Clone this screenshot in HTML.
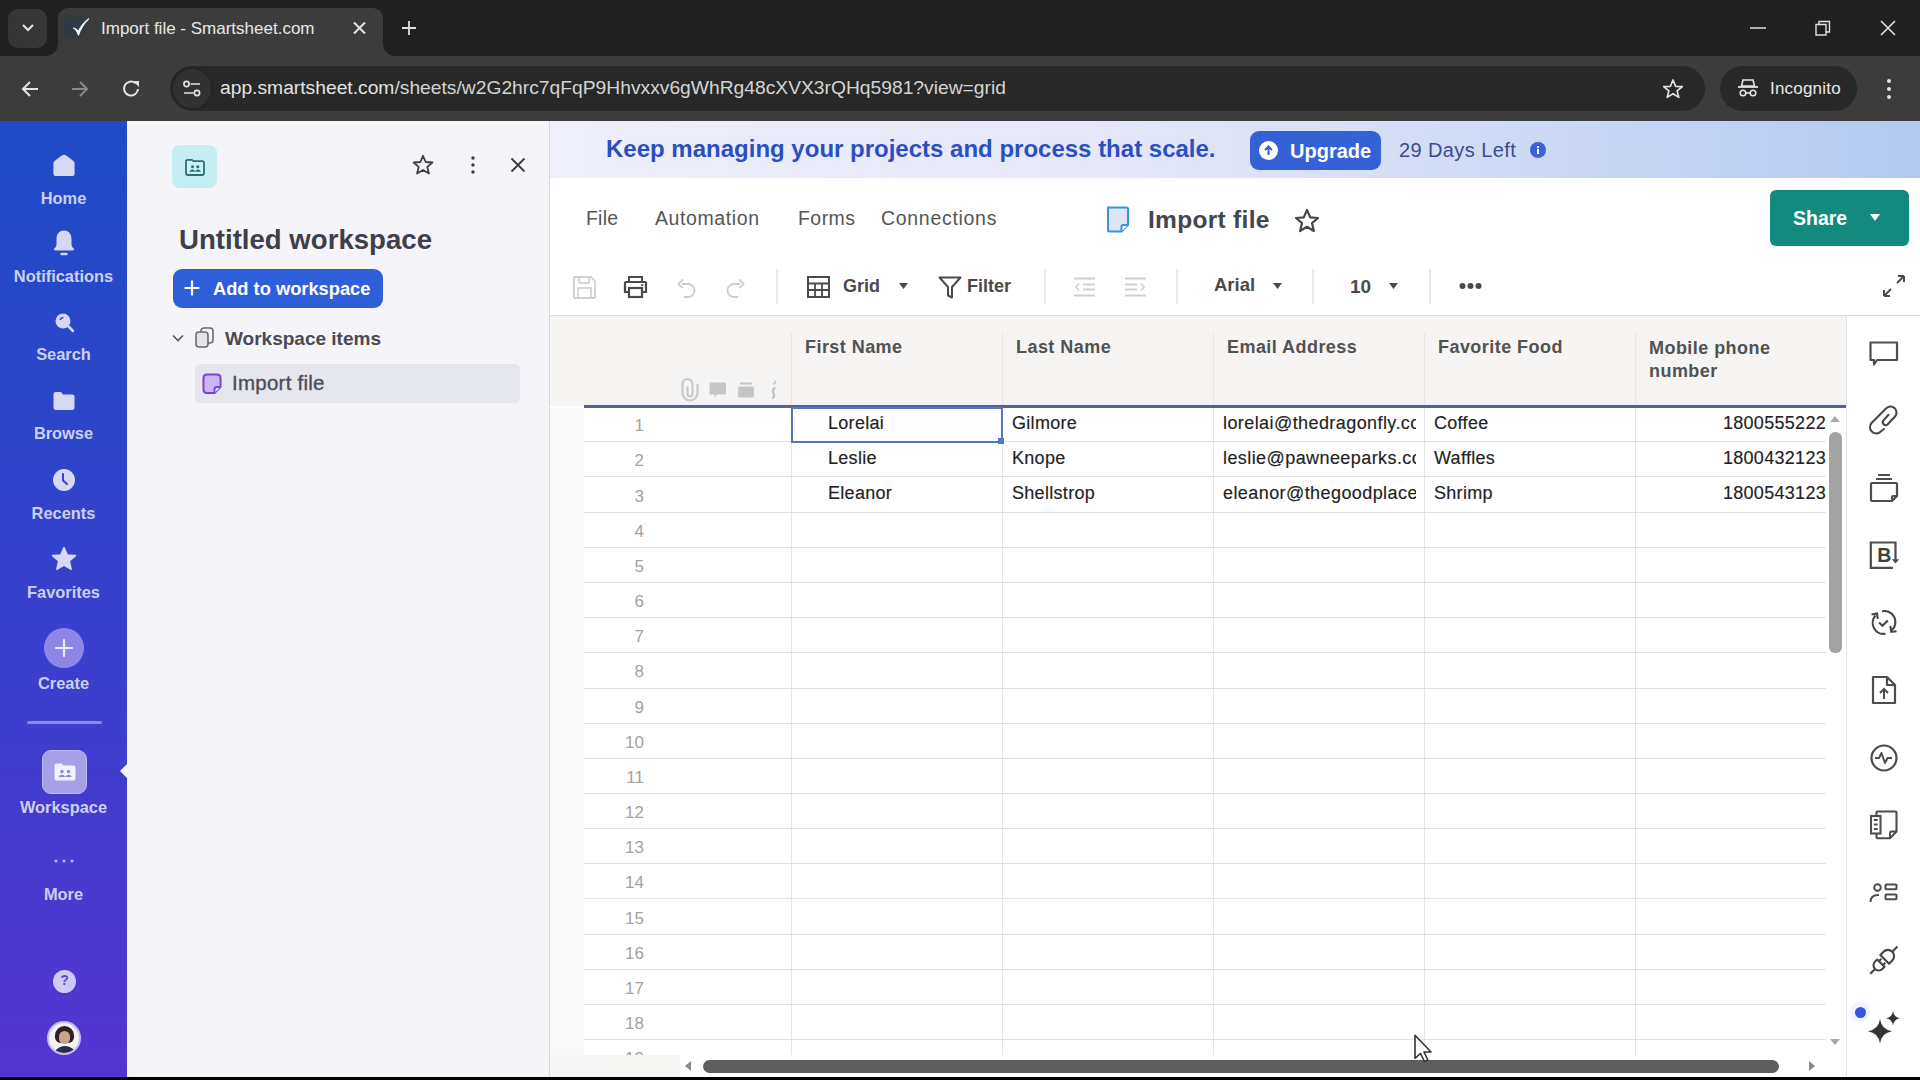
<!DOCTYPE html>
<html><head><meta charset="utf-8">
<style>
*{box-sizing:border-box;margin:0;padding:0}
html,body{width:1920px;height:1080px;overflow:hidden;background:#000;font-family:"Liberation Sans",sans-serif}
.a{position:absolute}
svg{position:absolute;overflow:visible}
/* browser chrome */
#tabstrip{left:0;top:0;width:1920px;height:56px;background:#202020}
#toolbar{left:0;top:56px;width:1920px;height:65px;background:#3c3c3c}
.t{white-space:nowrap;position:absolute}
/* left nav */
#nav{left:0;top:121px;width:127px;height:956px;background:linear-gradient(180deg,#1f4bc6 0%,#2d45ca 35%,#3d3ecd 60%,#5535d1 100%)}
.navl{color:#ccd0f3;font-weight:bold;font-size:16.4px;width:127px;text-align:center;left:0}
/* panel */
#panel{left:127px;top:121px;width:423px;height:956px;background:#f4f4f9;border-right:1px solid #d9d9df}
/* main */
#main{left:550px;top:121px;width:1370px;height:956px;background:#fff}
#banner{left:550px;top:121px;width:1370px;height:57px;background:linear-gradient(90deg,#efeffa 0%,#e6e8f8 40%,#cfdaf5 70%,#b3c8f2 100%)}
.menu{font-size:19px;color:#555;top:207px}
.cellt{font-size:18px;color:#222;letter-spacing:0.3px;-webkit-text-stroke:0.15px #222}
.hdr{font-size:18px;color:#525252;font-weight:bold;letter-spacing:0.45px}
.rn{font-size:17px;color:#a2a2a2;text-align:right;width:40px;left:604px}
</style></head><body>
<!-- TAB STRIP -->
<div id="tabstrip" class="a"></div>
<div class="a" style="left:8px;top:9px;width:39px;height:39px;border-radius:10px;background:#363636"></div>
<svg style="left:20px;top:22px" width="16" height="12"><path d="M3 3 L8 8 L13 3" stroke="#e8e8e8" stroke-width="2" fill="none"/></svg>
<div class="a" style="left:58px;top:8px;width:325px;height:56px;background:#3c3c3c;border-radius:10px 10px 0 0"></div><div class="a" style="left:383px;top:44px;width:12px;height:12px;background:radial-gradient(circle at 100% 0,#202020 11.5px,#3c3c3c 12.2px)"></div><div class="a" style="left:46px;top:44px;width:12px;height:12px;background:radial-gradient(circle at 0 0,#202020 11.5px,#3c3c3c 12.2px)"></div>
<div class="a" style="left:64px;top:15px;width:24px;height:24px;background:radial-gradient(circle at 40% 50%,#2a3a50 0%,#33393f 55%,#3c3c3c 85%)"></div><svg style="left:70px;top:16px" width="24" height="24"><path d="M3.5 12 Q6 13 8.5 19 Q12 9 18.5 3 Q12 8 8.3 15.5 Q6.5 12.5 3.5 12 Z" fill="#f2f2f2" stroke="#f2f2f2" stroke-width="1.2" stroke-linejoin="round"/></svg>
<div class="t" style="left:101px;top:19px;font-size:17px;color:#e8e8e8">Import file - Smartsheet.com</div>
<svg style="left:353px;top:22px" width="13" height="12"><path d="M1 0.5 L12 11.5 M12 0.5 L1 11.5" stroke="#e0e0e0" stroke-width="2.1"/></svg>
<svg style="left:401px;top:20px" width="16" height="16"><path d="M8 1 V15 M1 8 H15" stroke="#e0e0e0" stroke-width="1.8"/></svg>
<svg style="left:1750px;top:27px" width="16" height="4"><path d="M0 1 H16" stroke="#e0e0e0" stroke-width="1.5"/></svg>
<svg style="left:1815px;top:20px" width="16" height="16"><path d="M1 4.5 H11 V15 H1 Z M4 4 V1.5 H14.5 V12 H11.5" stroke="#e0e0e0" stroke-width="1.4" fill="none"/></svg>
<svg style="left:1880px;top:20px" width="16" height="16"><path d="M1 1 L15 15 M15 1 L1 15" stroke="#e0e0e0" stroke-width="1.6"/></svg>
<!-- TOOLBAR -->
<div id="toolbar" class="a"></div>
<svg style="left:20px;top:79px" width="20" height="20"><path d="M18 10 H3 M10 3 L3 10 L10 17" stroke="#e3e3e3" stroke-width="2" fill="none"/></svg>
<svg style="left:70px;top:79px" width="20" height="20"><path d="M2 10 H17 M10 3 L17 10 L10 17" stroke="#8a8a8a" stroke-width="2" fill="none"/></svg>
<svg style="left:121px;top:78px" width="22" height="22"><path d="M17 11 A7 7 0 1 1 14.5 5.2" stroke="#e3e3e3" stroke-width="2" fill="none"/><path d="M12 3 H18 V9 Z" fill="#e3e3e3"/></svg>
<div class="a" style="left:170px;top:66px;width:1535px;height:45px;border-radius:23px;background:#282828"></div>
<div class="a" style="left:171px;top:67px;width:42px;height:43px;border-radius:22px;background:#313131;border:2px solid #242424"></div>
<svg style="left:182px;top:79px" width="20" height="20"><circle cx="4.5" cy="5" r="2.6" stroke="#e3e3e3" stroke-width="1.7" fill="none"/><path d="M8.5 5 H18 M2 14 H11.5" stroke="#e3e3e3" stroke-width="1.7"/><circle cx="15" cy="14" r="2.6" stroke="#e3e3e3" stroke-width="1.7" fill="none"/></svg>
<div class="t" style="left:220px;top:77px;font-size:19.25px;color:#e3e3e3">app.smartsheet.com<span style="color:#d4d4d4">/sheets/w2G2hrc7qFqP9Hhvxxv6gWhRg48cXVX3rQHq5981?view=grid</span></div>
<svg style="left:1662px;top:78px" width="22" height="22"><path d="M11 2 L13.6 8.3 L20.3 8.6 L15.1 12.8 L16.8 19.4 L11 15.7 L5.2 19.4 L6.9 12.8 L1.7 8.6 L8.4 8.3 Z" stroke="#e3e3e3" stroke-width="1.7" fill="none" stroke-linejoin="round"/></svg>
<div class="a" style="left:1720px;top:66px;width:137px;height:45px;border-radius:23px;background:#282828"></div>
<svg style="left:1737px;top:78px" width="22" height="20"><path d="M6 2 H16 L17.5 8 H4.5 Z" fill="none" stroke="#e3e3e3" stroke-width="1.6"/><path d="M1 9 H21" stroke="#e3e3e3" stroke-width="1.8"/><circle cx="6" cy="15" r="2.8" stroke="#e3e3e3" stroke-width="1.6" fill="none"/><circle cx="16" cy="15" r="2.8" stroke="#e3e3e3" stroke-width="1.6" fill="none"/><path d="M8.8 15 H13.2" stroke="#e3e3e3" stroke-width="1.6"/></svg>
<div class="t" style="left:1770px;top:79px;font-size:17px;color:#e8e8e8;letter-spacing:0.2px">Incognito</div>
<svg style="left:1886px;top:78px" width="6" height="22"><circle cx="3" cy="3" r="2" fill="#e3e3e3"/><circle cx="3" cy="11" r="2" fill="#e3e3e3"/><circle cx="3" cy="19" r="2" fill="#e3e3e3"/></svg>

<!-- LEFT NAV -->
<div id="nav" class="a"></div>

<svg style="left:52px;top:153px" width="24" height="24"><path d="M2 10.5 Q2 9 3.5 8 L10.5 2.8 Q12 1.8 13.5 2.8 L20.5 8 Q22 9 22 10.5 V20.5 Q22 22.5 20 22.5 H4 Q2 22.5 2 20.5 Z" fill="#d6d9f6" stroke="#d6d9f6" stroke-width="1.2" stroke-linejoin="round"/></svg>
<div class="t navl" style="top:188.5px">Home</div>
<svg style="left:52px;top:229px" width="24" height="28"><path d="M12 1.5 C6.5 1.5 4.5 5.5 4.5 10.5 V16 Q4.5 18 2 19.5 Q1.5 21.5 3.5 21.5 H20.5 Q22.5 21.5 22 19.5 Q19.5 18 19.5 16 V10.5 C19.5 5.5 17.5 1.5 12 1.5 Z" fill="#d6d9f6"/><path d="M9.5 25 H14.5" stroke="#d6d9f6" stroke-width="2.4" stroke-linecap="round"/></svg>
<div class="t navl" style="top:266.5px">Notifications</div>
<svg style="left:53px;top:311px" width="24" height="24"><circle cx="10" cy="10" r="7.5" fill="#d6d9f6"/><path d="M15 15 L20 20" stroke="#d6d9f6" stroke-width="2.6" stroke-linecap="round"/><path d="M7 9 Q8 6.5 10.5 6.5" stroke="#3b45cc" stroke-width="1.5" fill="none"/></svg>
<div class="t navl" style="top:345px">Search</div>
<svg style="left:52px;top:390px" width="24" height="22"><path d="M1.5 4 Q1.5 2 3.5 2 H9 L11 4.5 H20.5 Q22.5 4.5 22.5 6.5 V18 Q22.5 20 20.5 20 H3.5 Q1.5 20 1.5 18 Z" fill="#d6d9f6"/></svg>
<div class="t navl" style="top:424px">Browse</div>
<svg style="left:52px;top:468px" width="24" height="24"><circle cx="12" cy="12" r="11" fill="#d6d9f6"/><path d="M11 6 V12.5 L15 16" stroke="#3c3fcf" stroke-width="2" fill="none" stroke-linecap="round"/></svg>
<div class="t navl" style="top:504px">Recents</div>
<svg style="left:51px;top:546px" width="26" height="26"><path d="M13 1.5 L16.3 9 L24.5 9.6 L18.3 15 L20.2 23.3 L13 19 L5.8 23.3 L7.7 15 L1.5 9.6 L9.7 9 Z" fill="#d6d9f6" stroke="#d6d9f6" stroke-width="1.5" stroke-linejoin="round"/></svg>
<div class="t navl" style="top:582.5px">Favorites</div>
<div class="a" style="left:44px;top:628px;width:40px;height:40px;border-radius:20px;background:#8d86e6"></div>
<svg style="left:54px;top:638px" width="20" height="20"><path d="M10 2 V18 M2 10 H18" stroke="#eeeefe" stroke-width="2.2" stroke-linecap="round"/></svg>
<div class="t navl" style="top:674px">Create</div>
<div class="a" style="left:27px;top:721px;width:75px;height:3px;background:#8c8ae3;border-radius:2px"></div>
<div class="a" style="left:42px;top:750px;width:45px;height:44px;border-radius:9px;background:#a7a0e8;border:1.5px solid #bdb7f6"></div>
<svg style="left:53px;top:762px" width="24" height="20"><path d="M1.5 3.5 Q1.5 1.5 3.5 1.5 H8.5 L10.5 3.5 H20.5 Q22.5 3.5 22.5 5.5 V16.5 Q22.5 18.5 20.5 18.5 H3.5 Q1.5 18.5 1.5 16.5 Z" fill="#f3f1fd"/><circle cx="9" cy="9.5" r="1.7" fill="#8f86e0"/><circle cx="15.5" cy="9.5" r="1.7" fill="#8f86e0"/><path d="M5.5 15 Q6.5 12.8 9 12.8 Q11.5 12.8 12.3 15 Q13.3 12.8 15.5 12.8 Q18 12.8 18.8 15 Z" fill="#8f86e0"/></svg>
<div class="t navl" style="top:798px">Workspace</div>
<svg style="left:120px;top:763px" width="8" height="16"><path d="M8 0 L0 8 L8 16 Z" fill="#f3f3f8"/></svg>
<svg style="left:53px;top:858px" width="22" height="6"><circle cx="3" cy="3" r="1.6" fill="#b9b6ef"/><circle cx="11" cy="3" r="1.6" fill="#b9b6ef"/><circle cx="19" cy="3" r="1.6" fill="#b9b6ef"/></svg>
<div class="t navl" style="top:885px">More</div>
<div class="a" style="left:53px;top:970px;width:23px;height:23px;border-radius:12px;background:#cfcaf3"></div>
<div class="t" style="left:53px;top:972px;width:23px;text-align:center;font-size:14px;font-weight:bold;color:#5a4fc9">?</div>
<div class="a" style="left:47px;top:1021px;width:34px;height:34px;border-radius:17px;background:#f4f1f4;border:2px solid #c4bdf0;overflow:hidden">
 <div class="a" style="left:6px;top:3px;width:19px;height:17px;border-radius:10px 10px 6px 6px;background:#2d2320"></div>
 <div class="a" style="left:10px;top:8px;width:11px;height:13px;border-radius:6px;background:#c9a48c"></div>
 <div class="a" style="left:4px;top:23px;width:24px;height:12px;border-radius:12px 12px 0 0;background:#2a2d45"></div>
</div>


<!-- PANEL -->
<div id="panel" class="a"></div>
<div class="a" style="left:172px;top:145px;width:45px;height:43px;border-radius:8px;background:#c6eef2"></div>
<svg style="left:184px;top:158px" width="22" height="19"><path d="M2 3.5 Q2 1.8 3.8 1.8 H7.8 L9.3 3.2 H18.2 Q20 3.2 20 5 V15 Q20 17 18 17 H4 Q2 17 2 15 Z" fill="#c8f2f6" stroke="#2a6f75" stroke-width="1.8"/><circle cx="8.5" cy="8.8" r="1.5" fill="#2a6f75"/><circle cx="13.8" cy="8.8" r="1.5" fill="#2a6f75"/><path d="M5.3 13.8 Q6 11.6 8.5 11.6 Q10.5 11.6 11.2 13.8 Q11.8 11.6 13.8 11.6 Q16.2 11.6 16.9 13.8 Z" fill="#2a6f75"/></svg>
<svg style="left:412px;top:154px" width="22" height="22"><path d="M11 1.8 L13.7 8 L20.4 8.5 L15.3 12.9 L16.9 19.5 L11 16 L5.1 19.5 L6.7 12.9 L1.6 8.5 L8.3 8 Z" stroke="#3d3d46" stroke-width="1.8" fill="none" stroke-linejoin="round"/></svg>
<svg style="left:470px;top:155px" width="6" height="20"><circle cx="3" cy="3" r="1.7" fill="#3d3d46"/><circle cx="3" cy="10" r="1.7" fill="#3d3d46"/><circle cx="3" cy="17" r="1.7" fill="#3d3d46"/></svg>
<svg style="left:510px;top:157px" width="16" height="16"><path d="M1.5 1.5 L14.5 14.5 M14.5 1.5 L1.5 14.5" stroke="#3d3d46" stroke-width="1.8"/></svg>
<div class="t" style="left:179px;top:223.5px;font-size:27.6px;font-weight:bold;color:#3f3f4a">Untitled workspace</div>
<div class="a" style="left:173px;top:269px;width:210px;height:39px;border-radius:9px;background:#2f5ed9"></div>
<svg style="left:183px;top:279px" width="18" height="18"><path d="M9 1.5 V16.5 M1.5 9 H16.5" stroke="#fff" stroke-width="2.2"/></svg>
<div class="t" style="left:213px;top:278px;font-size:18.3px;font-weight:bold;color:#fff">Add to workspace</div>
<svg style="left:171px;top:333px" width="14" height="10"><path d="M2 2.5 L7 7.5 L12 2.5" stroke="#55555e" stroke-width="1.6" fill="none"/></svg>
<svg style="left:194px;top:326px" width="22" height="24"><rect x="7" y="2" width="12" height="15" rx="3" fill="none" stroke="#6a6a72" stroke-width="1.6"/><rect x="2" y="6" width="12" height="15" rx="3" fill="#e4e4ea" stroke="#6a6a72" stroke-width="1.6"/></svg>
<div class="t" style="left:225px;top:327.5px;font-size:19px;font-weight:bold;color:#4a4a54">Workspace items</div>
<div class="a" style="left:195px;top:364px;width:325px;height:39px;border-radius:5px;background:#e6e6ee"></div>
<svg style="left:202px;top:373px" width="20" height="22"><path d="M5 1.5 H15 Q18.5 1.5 18.5 5 V14 L12.5 20 H5 Q1.5 20 1.5 16.5 V5 Q1.5 1.5 5 1.5 Z" fill="#cbb6f7" stroke="#7840de" stroke-width="2" stroke-linejoin="round"/><path d="M18.5 14 H15 Q12.5 14 12.5 16.5 V20" fill="#e9dffc" stroke="#7840de" stroke-width="1.8"/></svg>
<div class="t" style="left:232px;top:371px;font-size:20.5px;color:#4d4d56;letter-spacing:0.25px;-webkit-text-stroke:0.35px #4d4d56">Import file</div>


<!-- MAIN -->
<div id="main" class="a"></div>
<div id="banner" class="a"></div>
<div class="t" style="left:606px;top:135px;font-size:24px;font-weight:bold;color:#2a4fc2">Keep managing your projects and process that scale.</div>
<div class="a" style="left:1250px;top:131px;width:131px;height:39px;border-radius:9px;background:#3461d6"></div>
<div class="a" style="left:1259px;top:141px;width:19px;height:19px;border-radius:10px;background:#fff"></div>
<svg style="left:1259px;top:141px" width="19" height="19"><path d="M9.5 14 V5.5 M6 9 L9.5 5.5 L13 9" stroke="#3461d6" stroke-width="2" fill="none"/></svg>
<div class="t" style="left:1290px;top:139.5px;font-size:20px;font-weight:bold;color:#fff">Upgrade</div>
<div class="t" style="left:1399px;top:139px;font-size:20px;color:#3b4c8e;letter-spacing:0.4px">29 Days Left</div>
<div class="a" style="left:1530px;top:142px;width:16px;height:16px;border-radius:8px;background:#3a63d8"></div>
<div class="a" style="left:1537px;top:149px;width:2.2px;height:5px;background:#fff"></div><div class="a" style="left:1537px;top:145.5px;width:2.2px;height:2.2px;background:#fff"></div>
<div class="t" style="left:586px;top:207px;font-size:19.5px;color:#555;letter-spacing:0.2px">File</div>
<div class="t" style="left:655px;top:207px;font-size:19.5px;color:#555;letter-spacing:0.6px">Automation</div>
<div class="t" style="left:798px;top:207px;font-size:19.5px;color:#555;letter-spacing:0.45px">Forms</div>
<div class="t" style="left:881px;top:207px;font-size:19.5px;color:#555;letter-spacing:0.7px">Connections</div>
<svg style="left:1105px;top:205px" width="26" height="29"><path d="M3 2.5 H21.5 Q23 2.5 23 4 V20 L16.5 26.5 H4.5 Q3 26.5 3 25 V4 Q3 2.5 4.5 2.5 Z" fill="#d9e7f8" stroke="#3b93cf" stroke-width="2" stroke-linejoin="round"/><path d="M23 20 H18 Q16.5 20 16.5 21.5 V26.5" fill="#fff" stroke="#3b93cf" stroke-width="2"/></svg>
<div class="t" style="left:1148px;top:206px;font-size:24.5px;font-weight:bold;color:#45454c;letter-spacing:0.3px">Import file</div>
<svg style="left:1294px;top:208px" width="26" height="25"><path d="M13 2 L16.2 9.4 L24 10 L18 15.2 L19.9 23 L13 18.8 L6.1 23 L8 15.2 L2 10 L9.8 9.4 Z" stroke="#45454c" stroke-width="2.2" fill="none" stroke-linejoin="round"/></svg>
<div class="a" style="left:1770px;top:190px;width:139px;height:56px;border-radius:6px;background:#138a7e"></div>
<div class="t" style="left:1793px;top:207px;font-size:19.5px;font-weight:bold;color:#fff">Share</div>
<svg style="left:1869px;top:213px" width="12" height="9"><path d="M1 1 H11 L6 8 Z" fill="#fff"/></svg>
<svg style="left:573px;top:276px" width="23" height="23"><path d="M1 2 Q1 1 2 1 H18 L22 5 V21 Q22 22 21 22 H2 Q1 22 1 21 Z" fill="none" stroke="#cfcfcf" stroke-width="1.8"/><rect x="6" y="1" width="10" height="6" fill="none" stroke="#cfcfcf" stroke-width="1.6"/><rect x="5" y="12" width="13" height="10" fill="none" stroke="#cfcfcf" stroke-width="1.6"/></svg>
<svg style="left:623px;top:275px" width="25" height="23"><path d="M6 7 V2 H19 V7" fill="none" stroke="#4a4a4a" stroke-width="2"/><path d="M6 17 H2 V8 Q2 7 3 7 H22 Q23 7 23 8 V17 H19" fill="none" stroke="#4a4a4a" stroke-width="2.2"/><rect x="6" y="13" width="13" height="9" fill="none" stroke="#4a4a4a" stroke-width="2.2"/><path d="M18 10 H20.5" stroke="#4a4a4a" stroke-width="1.5"/></svg>
<svg style="left:675px;top:277px" width="22" height="21"><path d="M7 7 H13 A6.5 6.5 0 0 1 13 20 H9" fill="none" stroke="#cdcdcd" stroke-width="1.8"/><path d="M3 7 L8 2.5 M3 7 L8 11" stroke="#cdcdcd" stroke-width="1.8" fill="none"/></svg>
<svg style="left:725px;top:277px" width="22" height="21"><path d="M15 7 H9 A6.5 6.5 0 0 0 9 20 H13" fill="none" stroke="#cdcdcd" stroke-width="1.8"/><path d="M19 7 L14 2.5 M19 7 L14 11" stroke="#cdcdcd" stroke-width="1.8" fill="none"/></svg>
<div class="a" style="left:776px;top:269px;width:2px;height:35px;background:#e8e8e8"></div>
<div class="a" style="left:1044px;top:269px;width:2px;height:35px;background:#e8e8e8"></div>
<div class="a" style="left:1176px;top:269px;width:2px;height:35px;background:#e8e8e8"></div>
<div class="a" style="left:1312px;top:269px;width:2px;height:35px;background:#e8e8e8"></div>
<div class="a" style="left:1429px;top:269px;width:2px;height:35px;background:#e8e8e8"></div>
<svg style="left:807px;top:276px" width="23" height="22"><rect x="1" y="1" width="21" height="20" fill="none" stroke="#4a4a4a" stroke-width="2"/><path d="M1 7.5 H22 M1 14 H22 M8 7.5 V21 M15 7.5 V21" stroke="#4a4a4a" stroke-width="1.8"/></svg>
<div class="t" style="left:843px;top:276px;font-size:18px;font-weight:bold;color:#4a4a4a">Grid</div>
<svg style="left:899px;top:283px" width="9" height="6"><path d="M0 0 H9 L4.5 6 Z" fill="#4a4a4a"/></svg>
<svg style="left:938px;top:276px" width="24" height="23"><path d="M1.5 1.5 H22.5 L14 11 V21.5 L10 19.5 V11 Z" fill="none" stroke="#4a4a4a" stroke-width="2" stroke-linejoin="round"/></svg>
<div class="t" style="left:967px;top:276px;font-size:18px;font-weight:bold;color:#4a4a4a">Filter</div>
<svg style="left:1073px;top:277px" width="23" height="20"><path d="M1 1.5 H22 M10 7.5 H22 M10 12.5 H22 M1 18.5 H22" stroke="#d0d0d0" stroke-width="1.8"/><path d="M6 6.5 L3 10 L6 13.5" stroke="#d0d0d0" stroke-width="1.6" fill="none"/></svg>
<svg style="left:1124px;top:277px" width="23" height="20"><path d="M1 1.5 H22 M1 7.5 H13 M1 12.5 H13 M1 18.5 H22" stroke="#d0d0d0" stroke-width="1.8"/><path d="M17 6.5 L20 10 L17 13.5" stroke="#d0d0d0" stroke-width="1.6" fill="none"/></svg>
<div class="t" style="left:1214px;top:274px;font-size:18.5px;font-weight:bold;color:#4a4a4a">Arial</div>
<svg style="left:1273px;top:283px" width="9" height="6"><path d="M0 0 H9 L4.5 6 Z" fill="#4a4a4a"/></svg>
<div class="t" style="left:1350px;top:276px;font-size:19px;font-weight:bold;color:#4a4a4a">10</div>
<svg style="left:1389px;top:283px" width="9" height="6"><path d="M0 0 H9 L4.5 6 Z" fill="#4a4a4a"/></svg>
<svg style="left:1459px;top:282px" width="23" height="8"><circle cx="3.5" cy="4" r="3" fill="#4a4a4a"/><circle cx="11.5" cy="4" r="3" fill="#4a4a4a"/><circle cx="19.5" cy="4" r="3" fill="#4a4a4a"/></svg>
<svg style="left:1882px;top:274px" width="24" height="24"><path d="M2 22 L9 15 M2 22 V16 M2 22 H8 M22 2 L15 9 M22 2 V8 M22 2 H16" stroke="#4a4a4a" stroke-width="2" fill="none"/></svg>
<div class="a" style="left:550px;top:315px;width:1370px;height:1px;background:#dcdcdc"></div>
<div class="a" style="left:550px;top:316px;width:1296px;height:90px;background:#f6f5f4"></div>
<div class="a" style="left:550px;top:408px;width:34px;height:647px;background:#f9f9f9"></div>
<div class="a" style="left:584px;top:408px;width:1262px;height:647px;background:#fff"></div>
<div class="a" style="left:584px;top:402px;width:1262px;height:3px;background:#f0f0f8"></div><div class="a" style="left:584px;top:405px;width:1262px;height:3px;background:#55618e"></div>
<div class="a" style="left:791px;top:333px;width:1px;height:72px;background:#e8e6e4"></div>
<div class="a" style="left:791px;top:408px;width:1px;height:647px;background:#e6e6e6"></div>
<div class="a" style="left:1002px;top:333px;width:1px;height:72px;background:#e8e6e4"></div>
<div class="a" style="left:1002px;top:408px;width:1px;height:647px;background:#e6e6e6"></div>
<div class="a" style="left:1213px;top:333px;width:1px;height:72px;background:#e8e6e4"></div>
<div class="a" style="left:1213px;top:408px;width:1px;height:647px;background:#e6e6e6"></div>
<div class="a" style="left:1424px;top:333px;width:1px;height:72px;background:#e8e6e4"></div>
<div class="a" style="left:1424px;top:408px;width:1px;height:647px;background:#e6e6e6"></div>
<div class="a" style="left:1635px;top:333px;width:1px;height:72px;background:#e8e6e4"></div>
<div class="a" style="left:1635px;top:408px;width:1px;height:647px;background:#e6e6e6"></div>
<div class="a" style="left:584px;top:441px;width:1242px;height:1px;background:#e2e2e2"></div>
<div class="t rn" style="top:416.2px">1</div>
<div class="a" style="left:584px;top:476px;width:1242px;height:1px;background:#e2e2e2"></div>
<div class="t rn" style="top:451.4px">2</div>
<div class="a" style="left:584px;top:512px;width:1242px;height:1px;background:#e2e2e2"></div>
<div class="t rn" style="top:486.5px">3</div>
<div class="a" style="left:584px;top:547px;width:1242px;height:1px;background:#e2e2e2"></div>
<div class="t rn" style="top:521.7px">4</div>
<div class="a" style="left:584px;top:582px;width:1242px;height:1px;background:#e2e2e2"></div>
<div class="t rn" style="top:556.9px">5</div>
<div class="a" style="left:584px;top:617px;width:1242px;height:1px;background:#e2e2e2"></div>
<div class="t rn" style="top:592.1px">6</div>
<div class="a" style="left:584px;top:652px;width:1242px;height:1px;background:#e2e2e2"></div>
<div class="t rn" style="top:627.2px">7</div>
<div class="a" style="left:584px;top:688px;width:1242px;height:1px;background:#e2e2e2"></div>
<div class="t rn" style="top:662.4px">8</div>
<div class="a" style="left:584px;top:723px;width:1242px;height:1px;background:#e2e2e2"></div>
<div class="t rn" style="top:697.6px">9</div>
<div class="a" style="left:584px;top:758px;width:1242px;height:1px;background:#e2e2e2"></div>
<div class="t rn" style="top:732.7px">10</div>
<div class="a" style="left:584px;top:793px;width:1242px;height:1px;background:#e2e2e2"></div>
<div class="t rn" style="top:767.9px">11</div>
<div class="a" style="left:584px;top:828px;width:1242px;height:1px;background:#e2e2e2"></div>
<div class="t rn" style="top:803.1px">12</div>
<div class="a" style="left:584px;top:863px;width:1242px;height:1px;background:#e2e2e2"></div>
<div class="t rn" style="top:838.2px">13</div>
<div class="a" style="left:584px;top:898px;width:1242px;height:1px;background:#e2e2e2"></div>
<div class="t rn" style="top:873.4px">14</div>
<div class="a" style="left:584px;top:934px;width:1242px;height:1px;background:#e2e2e2"></div>
<div class="t rn" style="top:908.6px">15</div>
<div class="a" style="left:584px;top:969px;width:1242px;height:1px;background:#e2e2e2"></div>
<div class="t rn" style="top:943.8px">16</div>
<div class="a" style="left:584px;top:1004px;width:1242px;height:1px;background:#e2e2e2"></div>
<div class="t rn" style="top:978.9px">17</div>
<div class="a" style="left:584px;top:1039px;width:1242px;height:1px;background:#e2e2e2"></div>
<div class="t rn" style="top:1014.1px">18</div>
<div class="t rn" style="top:1049px;height:6px;overflow:hidden">19</div>
<div class="t hdr" style="left:805px;top:337px">First Name</div>
<div class="t hdr" style="left:1016px;top:337px">Last Name</div>
<div class="t hdr" style="left:1227px;top:337px">Email Address</div>
<div class="t hdr" style="left:1438px;top:337px">Favorite Food</div>
<div class="t hdr" style="left:1649px;top:337px;line-height:23px">Mobile phone<br>number</div>
<svg style="left:680px;top:377px" width="20" height="24"><path d="M7.5 10 V17 A2.5 2.5 0 0 0 12.5 17 V7 A5 5 0 0 0 2.5 7 V16 A7.5 7.5 0 0 0 17.5 16 V8" fill="none" stroke="#c9c9c9" stroke-width="2.2" stroke-linecap="round"/></svg><svg style="left:709px;top:382px" width="18" height="17"><path d="M0.5 1.5 Q0.5 0.5 1.5 0.5 H16 Q17 0.5 17 1.5 V11.5 Q17 12.5 16 12.5 H8 L5.5 16 V12.5 H1.5 Q0.5 12.5 0.5 11.5 Z" fill="#c6c6c6"/></svg><svg style="left:737px;top:382px" width="18" height="16"><rect x="3" y="0.5" width="12" height="2" fill="#c6c6c6"/><rect x="1" y="4.5" width="16" height="11" rx="1.5" fill="#c6c6c6"/><path d="M4 8 H14 M4 11.5 H14" stroke="#bdbdbd" stroke-width="1"/></svg><svg style="left:768px;top:378px" width="12" height="22"><path d="M7.5 3.5 L6 6" stroke="#cacaca" stroke-width="2" stroke-linecap="round"/><path d="M6.5 10 Q4 13 5.5 15.5 Q7 18 5 20" fill="none" stroke="#c4c4c4" stroke-width="2.4" stroke-linecap="round"/></svg>



<div class="t cellt" style="left:828px;top:412.7px">Lorelai</div>
<div class="t cellt" style="left:1012px;top:412.7px">Gilmore</div>
<div class="a" style="left:1223px;top:412.7px;width:193px;height:24px;overflow:hidden"><div class="t cellt" style="left:0;top:0;letter-spacing:0.42px">lorelai@thedragonfly.cc</div></div>
<div class="t cellt" style="left:1434px;top:412.7px">Coffee</div>
<div class="a" style="left:1636px;top:412.7px;width:190px;height:24px;overflow:hidden"><div class="t cellt" style="right:0;top:0;letter-spacing:0.3px">1800555222</div></div>
<div class="t cellt" style="left:828px;top:447.9px">Leslie</div>
<div class="t cellt" style="left:1012px;top:447.9px">Knope</div>
<div class="a" style="left:1223px;top:447.9px;width:193px;height:24px;overflow:hidden"><div class="t cellt" style="left:0;top:0;letter-spacing:0.42px">leslie@pawneeparks.com</div></div>
<div class="t cellt" style="left:1434px;top:447.9px">Waffles</div>
<div class="a" style="left:1636px;top:447.9px;width:190px;height:24px;overflow:hidden"><div class="t cellt" style="right:0;top:0;letter-spacing:0.3px">1800432123</div></div>
<div class="t cellt" style="left:828px;top:483.0px">Eleanor</div>
<div class="t cellt" style="left:1012px;top:483.0px">Shellstrop</div>
<div class="a" style="left:1223px;top:483.0px;width:193px;height:24px;overflow:hidden"><div class="t cellt" style="left:0;top:0;letter-spacing:0.42px">eleanor@thegoodplace.com</div></div>
<div class="t cellt" style="left:1434px;top:483.0px">Shrimp</div>
<div class="a" style="left:1636px;top:483.0px;width:190px;height:24px;overflow:hidden"><div class="t cellt" style="right:0;top:0;letter-spacing:0.3px">1800543123</div></div>
<div class="a" style="left:791px;top:406.5px;width:212px;height:36px;border:2px solid #5477bd"></div>
<div class="a" style="left:998px;top:438px;width:6px;height:6px;background:#5477bd"></div>
<svg style="left:1829px;top:415px" width="12" height="8"><path d="M1 7 L6 1 L11 7 Z" fill="#a8a8a8"/></svg>
<div class="a" style="left:1829px;top:432px;width:13px;height:221px;border-radius:6px;background:#a3a3a3"></div>
<svg style="left:1829px;top:1038px" width="12" height="8"><path d="M1 1 L6 7 L11 1 Z" fill="#a8a8a8"/></svg>
<div class="a" style="left:550px;top:1055px;width:1296px;height:22px;background:#fff"></div>
<div class="a" style="left:550px;top:1055px;width:130px;height:22px;background:linear-gradient(90deg,#f6f6f7,#f7f6f4)"></div>
<svg style="left:684px;top:1060px" width="8" height="12"><path d="M7 1 L1 6 L7 11 Z" fill="#8a8a8a"/></svg>
<div class="a" style="left:703px;top:1060px;width:1076px;height:13px;border-radius:7px;background:#5e5e5e"></div>
<svg style="left:1808px;top:1060px" width="8" height="12"><path d="M1 1 L7 6 L1 11 Z" fill="#8a8a8a"/></svg>
<div class="a" style="left:1846px;top:316px;width:74px;height:761px;background:#fff;border-left:1px solid #e2e2e2"></div>
<svg style="left:1869px;top:341px" width="30" height="26"><path d="M1.5 1.5 H28 V19 H8 L5 23.5 V19 H1.5 Z" fill="none" stroke="#4d4d4d" stroke-width="2.2" stroke-linejoin="round"/></svg>
<svg style="left:1860px;top:395px" width="50" height="50"><path d="M24 34 L19.5 37.5 A6.3 6.3 0 0 1 11.5 28 L26 13.5 A5.3 5.3 0 0 1 35 21.5 L27.5 29.5 A2.9 2.9 0 0 1 23.3 25.6 L28.5 19.8" fill="none" stroke="#464646" stroke-width="2.1" stroke-linecap="round" stroke-linejoin="round"/></svg>
<svg style="left:1869px;top:473px" width="30" height="30"><path d="M9 2 H21 M7 6 H23" stroke="#4d4d4d" stroke-width="2"/><path d="M2 11 Q2 10 3 10 H27 Q28 10 28 11 V23 L23 28 H3 Q2 28 2 27 Z" fill="none" stroke="#4d4d4d" stroke-width="2.2" stroke-linejoin="round"/><path d="M28 23 H24 Q23 23 23 24 V28" fill="none" stroke="#4d4d4d" stroke-width="2"/></svg>
<svg style="left:1869px;top:541px" width="32" height="30"><path d="M26.5 19 V1.5 H1.8 V26.8 H24" fill="none" stroke="#4d4d4d" stroke-width="2.2"/><path d="M22.8 18.2 H30.2 L26.5 22.5 Z" fill="#4d4d4d"/><text x="8.3" y="20.8" font-family="Liberation Sans" font-weight="bold" font-size="19.5" fill="#3f3f3f">B</text></svg>
<svg style="left:1864px;top:600px" width="40" height="45"><path d="M18 11.3 A11 11 0 0 1 28 30 M21.5 33.7 A11 11 0 0 1 11.5 15.5" fill="none" stroke="#454545" stroke-width="2.1"/><path d="M26.3 26 L27.3 31.8 L32.5 31.2 M7.5 14.5 L13 13.5 L13.8 19" fill="none" stroke="#454545" stroke-width="2.1" stroke-linejoin="miter"/><path d="M15 22.5 L18.5 25.8 L23.8 20.5" fill="none" stroke="#454545" stroke-width="2.1"/></svg>
<svg style="left:1871px;top:675px" width="26" height="30"><path d="M2 2 H16 L24 10 V28 H2 Z M16 2 V10 H24" fill="none" stroke="#4d4d4d" stroke-width="2.2" stroke-linejoin="round"/><path d="M13 24 V14 M9 18 L13 14 L17 18" fill="none" stroke="#4d4d4d" stroke-width="2"/></svg>
<svg style="left:1869px;top:743px" width="30" height="30"><circle cx="15" cy="15" r="12.5" fill="none" stroke="#4d4d4d" stroke-width="2.2"/><path d="M6 15 H10 L12.5 10 L16 20 L18.5 15 H23" fill="none" stroke="#4d4d4d" stroke-width="2" stroke-linejoin="round"/></svg>
<svg style="left:1869px;top:810px" width="30" height="31"><path d="M7.5 2.5 Q7.5 1.5 8.5 1.5 H26.5 Q27.5 1.5 27.5 2.5 V21.5 L21 28.3 H8.5 Q7.5 28.3 7.5 27.3 Z" fill="#fff" stroke="#4d4d4d" stroke-width="2.1" stroke-linejoin="round"/><path d="M27.5 21.5 H22.5 Q21 21.5 21 23 V28.3" fill="none" stroke="#4d4d4d" stroke-width="1.9"/><rect x="2" y="6" width="9.5" height="17.5" fill="#fff" stroke="#4d4d4d" stroke-width="2.1"/><path d="M4.8 10 H8.7 M4.8 14.5 H8.7 M4.8 19 H8.7" stroke="#4d4d4d" stroke-width="2.2"/></svg>
<svg style="left:1868px;top:880px" width="32" height="26"><circle cx="9.5" cy="7.5" r="3.3" fill="none" stroke="#4d4d4d" stroke-width="2"/><path d="M2.5 22 Q2.5 15.5 9.5 15 H11" fill="none" stroke="#4d4d4d" stroke-width="2"/><rect x="17.5" y="4.5" width="11" height="4.8" rx="0.8" fill="none" stroke="#4d4d4d" stroke-width="2"/><rect x="17.5" y="14.5" width="11" height="4.8" rx="0.8" fill="none" stroke="#4d4d4d" stroke-width="2"/></svg>
<svg style="left:1862px;top:940px" width="44" height="40"><g transform="rotate(-45 22 20)" fill="none" stroke="#454545" stroke-width="2.1"><path d="M2.5 20 H9"/><path d="M17.5 14.8 H14.5 A5.2 5.2 0 0 0 14.5 25.2 H17.5 Z" stroke-linejoin="round"/><path d="M17.5 17.2 H21 M17.5 22.8 H21"/><path d="M23 13.8 H27.5 A6.2 6.2 0 0 1 27.5 26.2 H23 Z" stroke-linejoin="round"/><path d="M33.7 20 H41"/></g></svg>
<div class="a" style="left:1850px;top:1002px;width:20px;height:20px;border-radius:10px;background:#f1f2fb"></div><div class="a" style="left:1854.5px;top:1006.5px;width:11px;height:11px;border-radius:6px;background:#3556e0"></div><svg style="left:1866px;top:1008px" width="40" height="40"><path d="M14 11 Q15.5 21.5 26 23.3 Q15.5 25 14 35.5 Q12.5 25 2 23.3 Q12.5 21.5 14 11 Z" fill="#333"/><path d="M27 3 Q27.9 9.2 34 10.3 Q27.9 11.4 27 17.5 Q26.1 11.4 20 10.3 Q26.1 9.2 27 3 Z" fill="#333"/></svg>
<svg style="left:1410px;top:1030px" width="30" height="36"><path d="M5 5.3 V28.3 L10.5 23.5 L14.5 31.5 L17.8 30 L14 22 H21 Z" fill="#fff" stroke="#333" stroke-width="1.6" stroke-linejoin="round"/></svg>

<!-- bottom black bar -->
<div class="a" style="left:0;top:1077px;width:1920px;height:3px;background:#000"></div>
</body></html>
